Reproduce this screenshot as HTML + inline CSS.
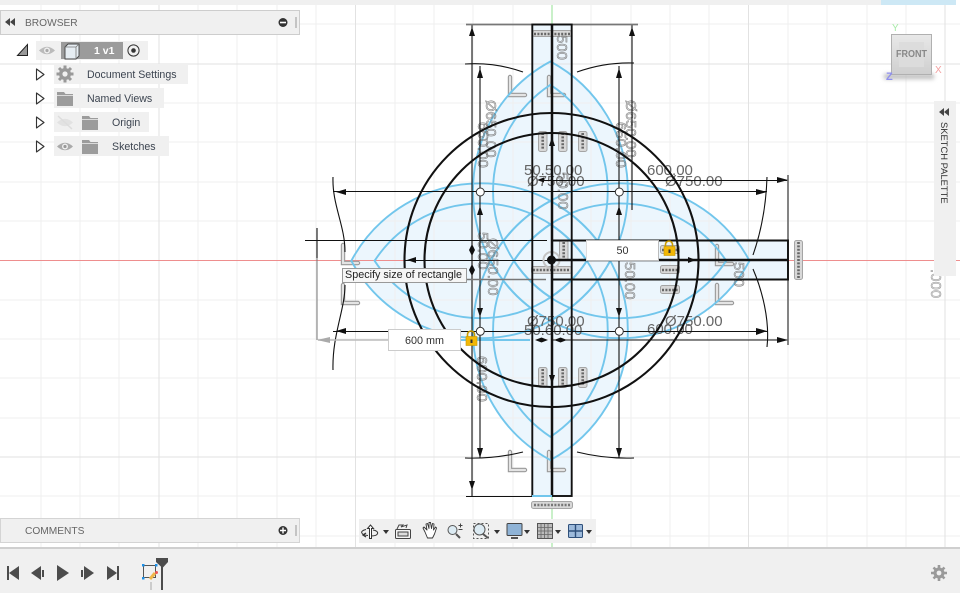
<!DOCTYPE html>
<html><head><meta charset="utf-8"><style>
html,body{margin:0;padding:0;background:#fff}
#r{position:relative;width:960px;height:593px;overflow:hidden;background:#fff;font-family:"Liberation Sans",sans-serif}
svg{position:absolute;left:0;top:0}
.p{position:absolute;background:#f0f0f0;box-sizing:border-box}
.t{position:absolute;font-size:10.6px;color:#3c4450;white-space:nowrap;line-height:14px}
.dim{font:15px "Liberation Sans",sans-serif;fill:#666}
.rot{font:15px "Liberation Sans",sans-serif;fill:#888;fill-opacity:.25;stroke:#777;stroke-width:.5}
</style></head><body><div id="r">
<svg width="960" height="593" viewBox="0 0 960 593">
<defs>
<g id="ph"><rect x="0.5" y="0.5" width="19" height="8" rx="2" fill="#d8d8d8" stroke="#a5a5a5"/><line x1="2" y1="5" x2="18" y2="5" stroke="#666" stroke-width="2.6" stroke-dasharray="2 1.4"/></g>
<g id="pv"><rect x="0.5" y="0.5" width="8.5" height="20" rx="2" fill="#d8d8d8" stroke="#a5a5a5"/><line x1="4.7" y1="2" x2="4.7" y2="19" stroke="#666" stroke-width="2.6" stroke-dasharray="2 1.4"/></g>
<path id="L" d="M0 0V18H15" fill="none" stroke="#999" stroke-width="4.4" stroke-linecap="round"/>
<path id="L2" d="M0 0V18H15" fill="none" stroke="#e4e4e4" stroke-width="2.2" stroke-linecap="round"/>
</defs>
<!-- pale fill -->
<g fill="#ecf6fd">
<path d="M351.3 260.8A147 147 0 0 1 610.3 260.8A147 147 0 0 1 351.3 260.8Z"/>
<path d="M490.5 260.8A147 147 0 0 1 749.5 260.8A147 147 0 0 1 490.5 260.8Z"/>
<path d="M550.4 61.5A147 147 0 0 1 550.4 320.5A147 147 0 0 1 550.4 61.5Z"/>
<path d="M550.4 201.1A147 147 0 0 1 550.4 460.1A147 147 0 0 1 550.4 201.1Z"/>
<rect x="532" y="24" width="40" height="472"/><rect x="552" y="240" width="236" height="40"/>
</g>
<!-- grid -->
<g stroke="#efefef" stroke-width="1" fill="none">
<path d="M41 0V593M80 0V593M119 0V593M198 0V593M237 0V593M277 0V593M316 0V593M395 0V593M434 0V593M473 0V593M513 0V593M591 0V593M631 0V593M670 0V593M709 0V593M788 0V593M827 0V593M867 0V593M906 0V593"/>
<path d="M0 24H960M0 103H960M0 142H960M0 182H960M0 221H960M0 300H960M0 339H960M0 378H960M0 418H960M0 496H960M0 536H960"/>
</g>
<g stroke="#e2e2e2" stroke-width="1" fill="none"><path d="M159 0V593M355.5 0V593M748.5 0V593M945 0V593M0 64H960M0 457H960"/></g>
<line x1="0" y1="260.5" x2="960" y2="260.5" stroke="#ee8e8e" stroke-width="1.1"/>
<line x1="552" y1="0" x2="552" y2="24" stroke="#a5e6a5" stroke-width="1.2"/>
<line x1="552" y1="496" x2="552" y2="547" stroke="#a5e6a5" stroke-width="1.2"/>
<!-- constraints -->
<use href="#L" x="510" y="77"/><use href="#L2" x="510" y="77"/><use href="#L" x="549" y="77"/><use href="#L2" x="549" y="77"/>
<use href="#L" x="510" y="452"/><use href="#L2" x="510" y="452"/><use href="#L" x="549" y="452"/><use href="#L2" x="549" y="452"/>
<use href="#L" x="343" y="245"/><use href="#L2" x="343" y="245"/><use href="#L" x="343" y="285"/><use href="#L2" x="343" y="285"/>
<use href="#L" x="717" y="246"/><use href="#L2" x="717" y="246"/><use href="#L" x="717" y="285"/><use href="#L2" x="717" y="285"/>
<use href="#pv" x="538" y="131"/><use href="#pv" x="558" y="131"/><use href="#pv" x="578" y="131"/>
<use href="#pv" x="538" y="367"/><use href="#pv" x="558" y="367"/><use href="#pv" x="578" y="367"/>
<use href="#pv" x="559" y="240"/>
<rect x="794.5" y="240.5" width="8" height="39" rx="2" fill="#d8d8d8" stroke="#a5a5a5"/><line x1="798.5" y1="242" x2="798.5" y2="278" stroke="#666" stroke-width="2.6" stroke-dasharray="2 1.4"/>
<use href="#ph" x="660" y="245"/><use href="#ph" x="660" y="265"/><use href="#ph" x="660" y="285"/>
<rect x="531.5" y="266.5" width="40" height="7" rx="2" fill="#d8d8d8" stroke="#a5a5a5"/><line x1="533" y1="270" x2="570" y2="270" stroke="#666" stroke-width="2.6" stroke-dasharray="2 1.4"/>
<rect x="532.5" y="30.5" width="39" height="6" rx="2" fill="#d8d8d8" stroke="#a5a5a5"/><line x1="534" y1="34" x2="570" y2="34" stroke="#666" stroke-width="2.4" stroke-dasharray="2 1.4"/>
<rect x="531.5" y="501.5" width="41" height="7" rx="2" fill="#d8d8d8" stroke="#a5a5a5"/><line x1="534" y1="505" x2="570" y2="505" stroke="#777" stroke-width="2.4" stroke-dasharray="2 1.4"/>
<!-- blue arcs -->
<g fill="none" stroke="#72c6ec" stroke-width="1.9">
<path d="M351.3 260.8A147 147 0 0 1 610.3 260.8A147 147 0 0 1 351.3 260.8Z"/>
<path d="M490.5 260.8A147 147 0 0 1 749.5 260.8A147 147 0 0 1 490.5 260.8Z"/>
<path d="M550.4 61.5A147 147 0 0 1 550.4 320.5A147 147 0 0 1 550.4 61.5Z"/>
<path d="M550.4 201.1A147 147 0 0 1 550.4 460.1A147 147 0 0 1 550.4 201.1Z"/>
<path d="M374.6 260.8A127 127 0 0 1 587 260.8A127 127 0 0 1 374.6 260.8Z"/>
<path d="M513.8 260.8A127 127 0 0 1 726.2 260.8A127 127 0 0 1 513.8 260.8Z"/>
<path d="M550.4 84.8A127 127 0 0 1 550.4 297.2A127 127 0 0 1 550.4 84.8Z"/>
<path d="M550.4 224.4A127 127 0 0 1 550.4 436.8A127 127 0 0 1 550.4 224.4Z"/>
<line x1="461" y1="340" x2="530" y2="340"/>
</g>
<!-- dimension text -->
<g class="dim">
<text x="524" y="175">50.50.00</text><text x="527" y="186">Ø750.00</text>
<text x="647" y="175">600.00</text><text x="665" y="186">Ø750.00</text>
<text x="527" y="326">Ø750.00</text><text x="524" y="335">50.60.00</text>
<text x="647" y="334">600.00</text><text x="665" y="326">Ø750.00</text>
</g>
<g class="rot">
<text transform="translate(486,100) rotate(90)">Ø650.00</text>
<text transform="translate(478,122) rotate(90)">650.00</text>
<text transform="translate(626,100) rotate(90)">Ø650.00</text>
<text transform="translate(616,122) rotate(90)">650.00</text>
<text transform="translate(558,172) rotate(90)">50.00</text>
<text transform="translate(557,35) rotate(90)">500</text>
<text transform="translate(478,232) rotate(90)">50.00</text>
<text transform="translate(488,238) rotate(90)">Ø650.00</text>
<text transform="translate(625,262) rotate(90)">50.00</text>
<text transform="translate(734,262) rotate(90)">500</text>
<text transform="translate(477,356) rotate(90)">600.00</text>
<text transform="translate(931,269) rotate(90)" style="stroke:#999">.000</text>
</g>
<!-- black thin lines -->
<g stroke="#111" stroke-width="1.1" fill="none">
<path d="M466 496.5H532M472 24V496M480 66V458M619 66V458M632 24V210"/>
<path d="M333 191.5H767M333 331.5H767M540 180.5H788M552 340H788"/>
<path d="M305 240.5H547M317 228V258M405 260.5H552"/>
<path d="M465 64Q495 62 523 72M577 72Q605 62 634 63M465 458Q495 459 523 452M577 452Q605 459 634 458"/>
<path d="M333 177C332 205 345 225 345 252M345 285C345 310 332 335 333 370M767 177C766 210 760 235 753 255M753 269C762 290 770 320 767 347"/>
</g>
<g stroke="#777" fill="none"><path d="M438 279.5H546" stroke-width="1.6"/><path d="M466 24.5H638M788 175V345" stroke-width="1.8"/><path d="M317 258V340" stroke-width="1"/></g>
<line x1="318" y1="340" x2="388" y2="340" stroke="#bbb" stroke-width="1.6"/>
<polygon points="317,340 330,337 330,343" fill="#aaa"/>
<!-- heavy -->
<circle cx="551.5" cy="260" r="8" fill="none" stroke="#c4c4c4" stroke-width="2"/>
<g stroke="#111" fill="none">
<circle cx="551.5" cy="260" r="147" stroke-width="2.1"/>
<circle cx="551.5" cy="260" r="127" stroke-width="2.1"/>
<rect x="532.3" y="24.5" width="39.4" height="471.5" stroke-width="1.9"/>
<path d="M552 240.5H788V279.5H552" stroke-width="1.9"/>
<path d="M552 24V496" stroke-width="2.5"/>
<path d="M552 260H788" stroke-width="2.5"/>
</g>
<line x1="532" y1="496" x2="552" y2="496" stroke="#72c6ec" stroke-width="2"/>
<circle cx="551.5" cy="260" r="4.5" fill="#111"/>
<!-- arrows -->
<g fill="#111">
<polygon points="472,27 469,36 475,36"/><polygon points="472,490 469,481 475,481"/>
<polygon points="632,27 629,36 635,36"/>
<polygon points="480,68 477,78 483,78"/><polygon points="480,458 477,448 483,448"/>
<polygon points="619,68 616,78 622,78"/><polygon points="619,458 616,448 622,448"/>
<polygon points="480,206 477,215 483,215"/><polygon points="480,317 477,308 483,308"/>
<polygon points="619,206 616,215 622,215"/><polygon points="619,317 616,308 622,308"/>
<polygon points="472,244 469,250 475,250"/><polygon points="472,256 469,250 475,250"/>
<polygon points="472,264 469,270 475,270"/><polygon points="472,276 469,270 475,270"/>
<polygon points="552,137 549,146 555,146"/><polygon points="552,384 549,375 555,375"/>
<polygon points="336,192 346,189 346,195"/><polygon points="336,331 346,328 346,334"/>
<polygon points="767,192 756,189 756,195"/><polygon points="767,331 756,328 756,335"/>
<polygon points="788,180 777,177 777,183"/><polygon points="788,340 777,337 777,343"/>
<polygon points="407,260 416,257 416,263"/>
<polygon points="696,260 688,257 688,263"/>
<polygon points="535,340 541.5,337.5 541.5,342.5"/><polygon points="548,340 541.5,337.5 541.5,342.5"/>
<polygon points="554,340 560.5,337.5 560.5,342.5"/><polygon points="567,340 560.5,337.5 560.5,342.5"/>
<polygon points="537,180 544,177.5 544,182.5"/>
</g>
<g fill="#fff" stroke="#333" stroke-width="1"><circle cx="480.3" cy="192" r="4"/><circle cx="619.3" cy="192" r="4"/><circle cx="480.3" cy="331.3" r="4"/><circle cx="619.3" cy="331.3" r="4"/></g>
</svg>

<!-- top strip -->
<div class="p" style="left:0;top:0;width:881px;height:5px"></div>
<div class="p" style="left:881px;top:0;width:75px;height:5px;background:#cde8f5"></div>

<!-- tooltip + inputs -->
<div style="position:absolute;left:342px;top:268px;width:125px;height:15px;box-sizing:border-box;background:#f6f6f6;border:1px solid #999;font-size:10.8px;line-height:13px;padding-left:2px;color:#222;white-space:nowrap">Specify size of rectangle</div>
<div style="position:absolute;left:388px;top:329px;width:73px;height:22px;box-sizing:border-box;background:#fff;border:1px solid #ccc;font-size:10.8px;line-height:22px;text-align:center;color:#333">600 mm</div>
<div style="position:absolute;left:586px;top:240px;width:73px;height:21px;box-sizing:border-box;background:#fff;border-top:1px solid #bbb;border-bottom:1px solid #bbb;border-left:1px solid #ddd;border-right:1px solid #bbb;font-size:10.8px;line-height:20px;text-align:center;color:#333">50</div>
<svg width="960" height="593" viewBox="0 0 960 593">
<g><path d="M467.5 337v-2.5a3.5 3.5 0 0 1 7 0V337" fill="none" stroke="#c99a00" stroke-width="1.6"/><rect x="466" y="336.5" width="11" height="9" fill="#f2b705" stroke="#c99a00" stroke-width=".6"/><rect x="470.5" y="339.5" width="2" height="3.5" fill="#333"/></g>
<g transform="translate(198,-90)"><path d="M467.5 337v-2.5a3.5 3.5 0 0 1 7 0V337" fill="none" stroke="#c99a00" stroke-width="1.6"/><rect x="466" y="336.5" width="11" height="9" fill="#f2b705" stroke="#c99a00" stroke-width=".6"/><rect x="470.5" y="339.5" width="2" height="3.5" fill="#333"/></g>
</svg>

<!-- Browser -->
<div class="p" style="left:0;top:10px;width:300px;height:25px;border:1px solid #cdcdcd"></div>
<div class="t" style="left:25px;top:17px;color:#666;font-size:10.2px">BROWSER</div>
<div class="p" style="left:36px;top:41px;width:112px;height:19px"></div>
<div class="p" style="left:61px;top:42px;width:62px;height:17px;background:#9b9b9b"></div>
<div class="t" style="left:94px;top:44px;color:#fff;font-weight:bold;font-size:10.5px">1 v1</div>
<div class="p" style="left:54px;top:64px;width:134px;height:20px"></div><div class="t" style="left:87px;top:68px">Document Settings</div>
<div class="p" style="left:54px;top:88px;width:110px;height:20px"></div><div class="t" style="left:87px;top:92px">Named Views</div>
<div class="p" style="left:54px;top:112px;width:95px;height:20px"></div><div class="t" style="left:112px;top:116px">Origin</div>
<div class="p" style="left:54px;top:136px;width:115px;height:20px"></div><div class="t" style="left:112px;top:140px">Sketches</div>

<!-- Comments -->
<div class="p" style="left:0;top:518px;width:300px;height:25px;border:1px solid #d4d4d4"></div>
<div class="t" style="left:25px;top:525px;color:#666;font-size:10.2px">COMMENTS</div>

<!-- toolbar -->
<div class="p" style="left:359px;top:519px;width:237px;height:24px"></div>
<!-- timeline -->
<div class="p" style="left:0;top:547px;width:960px;height:46px;border-top:2px solid #cfcfcf"></div>

<!-- palette -->
<div class="p" style="left:934px;top:101px;width:22px;height:175px"></div>
<div class="t" style="left:904px;top:155px;width:80px;transform:rotate(90deg);font-size:9.4px;color:#333;text-align:center">SKETCH PALETTE</div>

<!-- viewcube -->
<div style="position:absolute;left:884px;top:74px;width:50px;height:5px;background:#bbb;filter:blur(2px)"></div>
<div style="position:absolute;left:891px;top:34px;width:41px;height:41px;box-sizing:border-box;border:1px solid #b0b0b0;background:linear-gradient(#e8e8e8,#cfcfcf)"></div>
<div style="position:absolute;left:899px;top:42px;width:25px;height:25px;background:#dcdcdc"></div>
<div class="t" style="left:891px;top:48px;width:41px;text-align:center;color:#888;font-size:10px;font-weight:bold;transform:scaleX(.9)">FRONT</div>
<div class="t" style="left:892px;top:22px;color:#a8eaa8;font-size:10px">Y</div>
<div class="t" style="left:935px;top:64px;color:#f3a0a0;font-size:10px">X</div>
<div class="t" style="left:886px;top:70px;color:#8f8fee;font-size:11px;font-weight:bold">Z</div>

<svg width="960" height="593" viewBox="0 0 960 593">
<!-- browser icons -->
<g fill="#444"><polygon points="5,22 10,18 10,26"/><polygon points="10,22 15,18 15,26"/><polygon points="939,112 944,108 944,116"/><polygon points="944,112 949,108 949,116"/></g>
<circle cx="283" cy="22.5" r="4.5" fill="#333"/><rect x="280" y="21.7" width="6" height="1.6" fill="#fff"/>
<line x1="296" y1="17" x2="296" y2="28" stroke="#999"/>
<circle cx="283" cy="530.5" r="4.5" fill="#333"/><path d="M280 530.5h6M283 527.5v6" stroke="#fff" stroke-width="1.4"/>
<line x1="296" y1="525" x2="296" y2="536" stroke="#999"/>
<path d="M17.5 55.5L27.5 44.5V55.5Z" fill="#999" stroke="#222"/>
<g fill="#fff" stroke="#333" stroke-width="1.1" stroke-linejoin="round">
<path d="M36.5 69V80L44 74.5Z"/><path d="M36.5 93V104L44 98.5Z"/><path d="M36.5 117V128L44 122.5Z"/><path d="M36.5 141V152L44 146.5Z"/>
</g>
<!-- eyes -->
<g><path d="M39 50.5Q47 43 55 50.5Q47 58 39 50.5Z" fill="#bbb"/><circle cx="47" cy="50.5" r="3" fill="#f0f0f0"/><circle cx="47" cy="50.5" r="1.6" fill="#aaa"/>
<path d="M57 146.5Q65 139 73 146.5Q65 154 57 146.5Z" fill="#aaa"/><circle cx="65" cy="146.5" r="3" fill="#f0f0f0"/><circle cx="65" cy="146.5" r="1.6" fill="#999"/>
<path d="M57 122.5Q65 115 73 122.5Q65 130 57 122.5Z" fill="#e2e2e2"/><line x1="58" y1="116" x2="72" y2="129" stroke="#ddd" stroke-width="1.5"/></g>
<!-- cube -->
<path d="M65 47l3-3h11v12l-3 3H65Z" fill="#e6edf2" stroke="#444" stroke-width=".9"/><path d="M76 47v12M65 47h11l3-3" fill="none" stroke="#777" stroke-width=".8"/>
<circle cx="133.5" cy="50.5" r="5.6" fill="none" stroke="#333" stroke-width="1"/><circle cx="133.5" cy="50.5" r="2.3" fill="#333"/>
<!-- gear -->
<g fill="#999"><circle cx="65" cy="74" r="6"/><g stroke="#999" stroke-width="3"><path d="M65 65.5v17M56.5 74h17M59 68l12 12M71 68l-12 12"/></g><circle cx="65" cy="74" r="2.6" fill="#f0f0f0"/></g>
<!-- folders -->
<g fill="#9c9c9c"><path d="M57 92h7l1.5 2H73v12H57Z"/><path d="M82 116h7l1.5 2H98v12H82Z"/><path d="M82 140h7l1.5 2H98v12H82Z"/></g>
<g stroke="#f0f0f0" stroke-width=".8"><path d="M57 95.5h16M82 119.5h16M82 143.5h16"/></g>

<!-- toolbar icons -->
<g fill="#333">
<polygon points="383,530 389,530 386,534"/><polygon points="494,530 500,530 497,534"/><polygon points="524,530 530,530 527,534"/><polygon points="555,530 561,530 558,534"/><polygon points="586,530 592,530 589,534"/>
</g>
<g fill="none" stroke="#333" stroke-width="1"><path d="M370.5 525l-3 3.5h2v10h2v-10h2Z" fill="#fff"/><path d="M366 529.5C359 531 361 535 368 535.5M373 530C380 531 379 536 371 536"/><path d="M366 533l-3 2 3 2" stroke-width="1.3"/></g>
<g fill="none" stroke="#444"><rect x="395.5" y="529.5" width="15" height="9" rx="1" fill="#f5f5f5"/><rect x="398" y="532" width="10" height="4" fill="#ddd"/><path d="M397 529l2-4h4l-2 2 6-2-1 3" stroke-width="1"/></g>
<path d="M425 532l-2-4 1-1 3 3-1-6 1.5-.5 1.5 5 0-6 1.5 0 1 6 1-5 1.5.5-.5 6 2-3 1 1-2 6-2 4h-5Z" fill="#fff" stroke="#333" stroke-width=".9" stroke-linejoin="round"/>
<circle cx="452.5" cy="530" r="4.5" fill="#dcebf3" stroke="#555"/><line x1="456" y1="534" x2="460" y2="538" stroke="#555" stroke-width="2"/>
<path d="M458.5 525.5h4M460.5 523.5v4M458.5 529.5h4" stroke="#444" fill="none"/>
<rect x="473.5" y="523.5" width="15" height="15" fill="none" stroke="#555" stroke-dasharray="2 2"/>
<circle cx="479.5" cy="529.5" r="5.5" fill="#dcebf3" stroke="#555"/><line x1="483" y1="534" x2="488" y2="538" stroke="#555" stroke-width="2"/>
<rect x="507" y="523.5" width="15" height="12" rx="1" fill="#8fb3d6" stroke="#444"/><path d="M511 538h7" stroke="#555" stroke-width="2"/>
<rect x="537.5" y="523.5" width="15" height="15" fill="#bbb" stroke="#555"/>
<path d="M541 524v14M544.5 524v14M548 524v14M538 527.5h14M538 531h14M538 534.5h14" stroke="#666" stroke-width=".8"/>
<rect x="568.5" y="524.5" width="14" height="13" rx="1" fill="#9dbadb" stroke="#2e4f7a"/><path d="M575.5 525v12M569 531h13" stroke="#2e4f7a" stroke-width="1.4"/>

<!-- timeline controls -->
<g fill="#4c4c4c">
<rect x="7" y="566" width="2" height="14"/><polygon points="9,573 19,566 19,580"/>
<polygon points="31,573 41,566 41,580"/><rect x="42" y="570" width="2" height="7"/>
<polygon points="57,565 69,573 57,581"/>
<rect x="81" y="570" width="2" height="7"/><polygon points="84,566 94,573 84,580"/>
<polygon points="107,566 117,573 107,580"/><rect x="117" y="566" width="2" height="14"/>
<rect x="161" y="564" width="2" height="26"/><polygon points="156,558 168,558 168,562 162.5,568 156,562"/>
</g>
<rect x="143.5" y="565.5" width="12" height="12" fill="none" stroke="#555"/>
<g fill="#1d8fe6"><rect x="142" y="564" width="2.5" height="2.5"/><rect x="155" y="564" width="2.5" height="2.5"/><rect x="142" y="577" width="2.5" height="2.5"/></g>
<path d="M150 579l5-6" stroke="#efb64a" stroke-width="3"/><circle cx="156.5" cy="572.5" r="1.5" fill="#ee5555"/>
<rect x="150" y="582" width="2" height="8" fill="#ccc"/>
<g fill="#9a9a9a"><circle cx="939" cy="573" r="5.5"/><g stroke="#9a9a9a" stroke-width="2.6"><path d="M939 565v16M931 573h16M933.5 567.5l11 11M944.5 567.5l-11 11"/></g><circle cx="939" cy="573" r="2.4" fill="#f0f0f0"/></g>
</svg>
</div></body></html>
